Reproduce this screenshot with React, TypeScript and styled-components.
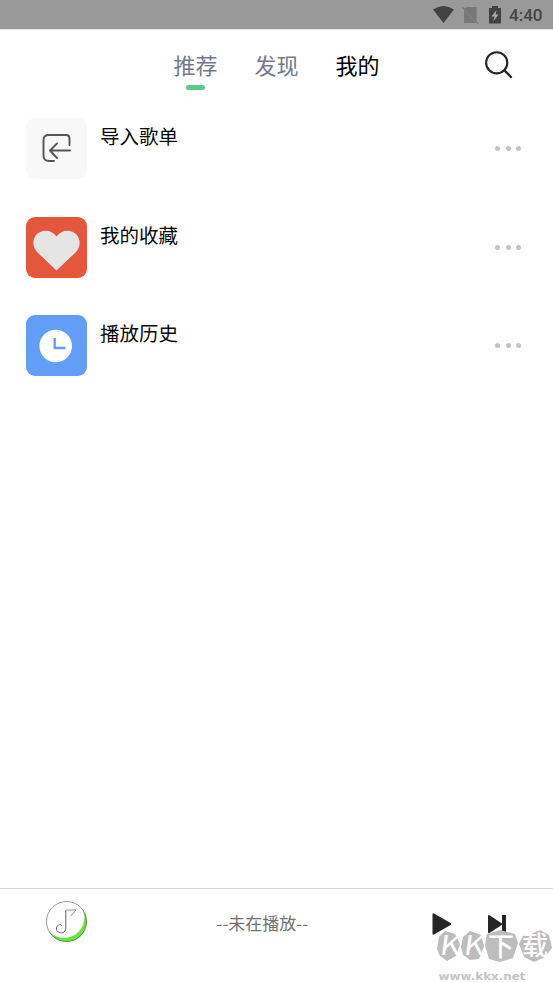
import React from "react";
import styled, { createGlobalStyle } from "styled-components";

const GlobalStyle = createGlobalStyle`
  * { box-sizing: border-box; }
  body {
    margin: 0;
    background: #fff;
    font-family: "Noto Sans CJK SC", "Noto Sans", sans-serif;
  }
`;

const Screen = styled.div`
  display: flex;
  flex-direction: column;
  width: 553px;
  height: 983px;
  overflow: hidden;
  background: #fff;
`;

const StatusBar = styled.div`
  display: flex;
  flex: none;
  justify-content: flex-end;
  height: 30px;
  padding-right: 9px;
  background: #999;
  border-bottom: 1px solid #e4e4e4;
`;

const StatusIcons = styled.svg`
  width: 76px;
  height: 29px;
`;

const Time = styled.span`
  width: 35px;
  font: 500 17px/31px Roboto, sans-serif;
  color: #444;
  white-space: nowrap;
`;

const Header = styled.header`
  display: grid;
  flex: none;
  grid-template-columns: 173.5px 1fr 74px;
  height: 88.4px;
`;

const Tabs = styled.nav`
  display: flex;
  grid-column: 2;
  gap: 37px;
`;

const Tab = styled.div<{ $color: string }>`
  display: flex;
  flex-direction: column;
  align-items: center;
  padding-top: 18px;
  font-size: 22px;
  line-height: 32px;
  color: ${(p) => p.$color};
`;

const Indicator = styled.span`
  width: 19px;
  height: 5px;
  margin-top: 5px;
  border-radius: 3px;
  background: #5fc891;
`;

const SearchIcon = styled.svg`
  width: 32px;
  height: 32px;
  margin: 20px 0 0 4px;
`;

const List = styled.main`
  display: flex;
  flex: 1;
  flex-direction: column;
  gap: 37.3px;
  padding: 0 32px 0 26px;
`;

const Row = styled.div`
  display: flex;
  height: 61px;
`;

const Tile = styled.div<{ $bg: string }>`
  flex: none;
  width: 61px;
  height: 61px;
  border-radius: 9px;
  background: ${(p) => p.$bg};

  svg { display: block; }
`;

const Label = styled.div`
  flex: 1;
  padding: 4px 0 0 13px;
  font-size: 19.5px;
  line-height: 28px;
  color: #080808;
`;

const Dots = styled.div`
  display: flex;
  gap: 5.5px;
  align-items: center;
`;

const Dot = styled.span`
  width: 5px;
  height: 5px;
  border-radius: 50%;
  background: #c3c3c6;
`;

const Player = styled.footer`
  position: relative;
  display: grid;
  flex: none;
  grid-template-columns: 216.5px 1fr 140px;
  height: 95px;
  border-top: 1px solid #d8d8d8;
`;

const Cover = styled.svg`
  width: 46px;
  height: 46px;
  margin: 10px 0 0 44px;
`;

const NowPlaying = styled.div`
  padding-top: 21px;
  font-size: 17px;
  line-height: 25px;
  color: #727272;
`;

const Controls = styled.svg`
  width: 140px;
  height: 70px;
`;

const Watermark = styled.svg`
  position: absolute;
  right: 0;
  bottom: 0;
  width: 120px;
  height: 73px;
`;

function ImportIcon() {
  return (
    <svg width="61" height="61" viewBox="0 0 61 61" fill="none" stroke="#555" strokeWidth="1.9" strokeLinecap="round" strokeLinejoin="round">
      <path d="M43.5 27V20.5Q43.5 17 40 17H23Q17.5 17 17.5 22V37.5Q17.5 43 23 43H28" />
      <path d="M44 32.5H24M31 25.5L24 32.5L31 40" />
    </svg>
  );
}

function HeartIcon() {
  return (
    <svg width="61" height="61" viewBox="0 0 61 61">
      <path fill="#e5e5e5" d="M30.5 53.5L11.5 35.5C7 31 6.5 25 8.5 20.5C12.5 12 25 11.5 30.5 19.5C36 11.5 48.5 12 52.5 20.5C54.5 25 54 31 49.5 35.5Z" />
    </svg>
  );
}

function ClockIcon() {
  return (
    <svg width="61" height="61" viewBox="0 0 61 61">
      <circle cx="29.7" cy="31" r="16.3" fill="#fff" />
      <path d="M28.7 23V33H39.5" fill="none" stroke="#629df5" strokeWidth="2.4" />
    </svg>
  );
}

const rows = [
  { label: "导入歌单", bg: "#f8f8f8", icon: <ImportIcon /> },
  { label: "我的收藏", bg: "#e4573c", icon: <HeartIcon /> },
  { label: "播放历史", bg: "#639ef6", icon: <ClockIcon /> },
];

export default function App() {
  return (
    <>
      <GlobalStyle />
      <Screen>
        <StatusBar>
          <StatusIcons viewBox="433 0 76 29">
            <path fill="#424242" d="M433 9.5Q443.5 2.5 454 9.5L443.5 23Z" />
            <path fill="#777" d="M467 7H476.5V21L464.5 8.8ZM464 10.5L476 23H464Z" />
            <path d="M462.5 7.5L478 23.5" stroke="#777" strokeWidth="1.5" />
            <path fill="#424242" d="M489 8H492V6H498V8H501V23.5H489Z" />
            <path fill="#aaa" d="M496.5 10L491.5 16.5H494.5L493.5 21L498.5 14.5H495.7Z" />
          </StatusIcons>
          <Time>4:40</Time>
        </StatusBar>
        <Header>
          <Tabs>
            <Tab $color="#74798d">推荐<Indicator /></Tab>
            <Tab $color="#74798d">发现</Tab>
            <Tab $color="#000">我的</Tab>
          </Tabs>
          <SearchIcon viewBox="0 0 32 32" fill="none" stroke="#252525" strokeWidth="2.1" strokeLinecap="round">
            <circle cx="13.7" cy="12.8" r="10.6" />
            <path d="M21.5 20.5L28 27" strokeWidth="2.3" />
          </SearchIcon>
        </Header>
        <List>
          {rows.map((row) => (
            <Row key={row.label}>
              <Tile $bg={row.bg}>{row.icon}</Tile>
              <Label>{row.label}</Label>
              <Dots><Dot /><Dot /><Dot /></Dots>
            </Row>
          ))}
        </List>
        <Player>
          <Cover viewBox="44 899 46 46">
            <circle cx="66.5" cy="921.5" r="20.4" fill="#69e33e" />
            <circle cx="64" cy="917.5" r="20.4" fill="#fff" />
            <circle cx="66.5" cy="921.5" r="20" fill="none" stroke="#555" strokeWidth=".6" />
            <path d="M66 910H76L70.5 916.5" fill="none" stroke="#666" strokeWidth=".7" />
            <path d="M65.8 910V928C65.8 935 56 934 56.5 928C57 924 62 924 61.5 926" fill="none" stroke="#555" strokeWidth=".9" />
          </Cover>
          <NowPlaying>--未在播放--</NowPlaying>
          <Controls viewBox="413 889 140 70" fill="#262626">
            <path d="M432.5 914Q432.5 913 434 913.5L451 923.3Q452 924 451 924.7L434 934.5Q432.5 935 432.5 934Z" />
            <path d="M488 916Q488 914.5 489.5 915.2L502 923.5V915H506V933H502V924.8L489.5 933Q488 933.5 488 932Z" />
          </Controls>
          <Watermark viewBox="433 910 120 73">
            <g fill="#bdbdbd">
              <path d="M445 931L455 934L460 944L456 956L447 961L440 956L437 949L439 937Z" />
              <path d="M470 931L481 935L484 946L479 959L470 960L463 955L461 947L463 937Z" />
              <path d="M487 934L500 930L515 934L518 943L513 958L500 962L489 959L485 945Z" />
              <path d="M523 936L531 934L540 930L549 935L552 948L545 957L534 962L524 957L519 944Z" />
            </g>
            <g fill="#fff" fontFamily="'Noto Sans CJK SC', sans-serif">
              <text transform="translate(439 955) skewX(-8)" fontSize="27" textLength="20" lengthAdjust="spacingAndGlyphs">K</text>
              <text transform="translate(463 955) skewX(-8)" fontSize="27" textLength="20" lengthAdjust="spacingAndGlyphs">K</text>
              <text x="488" y="956" fontSize="26" fontWeight="500">下</text>
              <text x="522" y="955" fontSize="26" fontWeight="500">载</text>
            </g>
            <text x="438.5" y="980" fill="#c4c4c4" fontFamily="'DejaVu Sans', sans-serif" fontWeight="700" fontSize="11" textLength="87" lengthAdjust="spacingAndGlyphs">www.kkx.net</text>
          </Watermark>
        </Player>
      </Screen>
    </>
  );
}
